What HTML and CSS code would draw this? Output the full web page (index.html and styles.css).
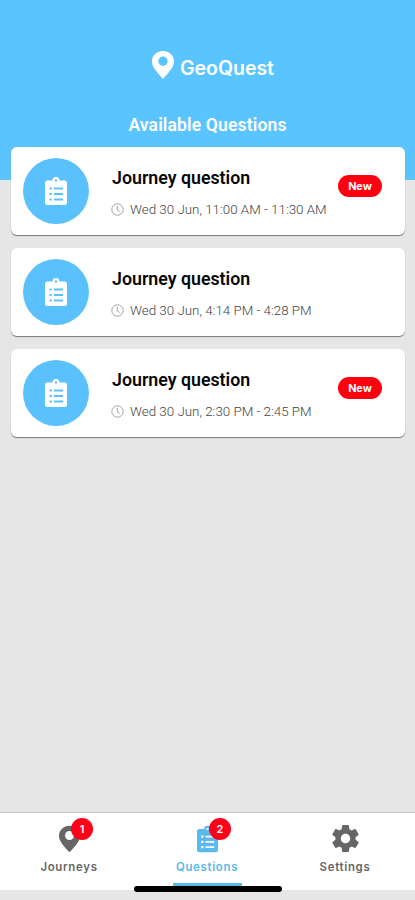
FILE: index.html
```html
<!DOCTYPE html>
<html lang="en">
<head>
<meta charset="utf-8">
<title>GeoQuest</title>
<link rel="stylesheet" href="styles.css">
</head>
<body>
<svg class="defs" width="0" height="0" aria-hidden="true">
  <symbol id="pin" viewBox="0 0 22 28"><path fill-rule="evenodd" d="M11 0C4.800 0 0 4.600 0 10.500 0 15.500 3 19 11 28 19 19 22 15.500 22 10.500 22 4.600 17.200 0 11 0ZM11 5.600A4.700 4.700 0 1 1 11 15A4.700 4.700 0 1 1 11 5.600Z"/></symbol>
  <symbol id="clipboard" viewBox="0 0 22 28"><path fill-rule="evenodd" d="M2.500 3.500H7.500A3.500 3.500 0 0 1 14.500 3.500H19.500A2.500 2.500 0 0 1 22 6V25.500A2.500 2.500 0 0 1 19.500 28H2.500A2.500 2.500 0 0 1 0 25.500V6A2.500 2.500 0 0 1 2.500 3.500ZM11 2.300A1.200 1.200 0 1 0 11 4.700A1.200 1.200 0 1 0 11 2.300ZM4.500 10.400H6.700V12.600H4.500ZM9 10.500H18V12.500H9ZM4.500 15.900H6.700V18.100H4.500ZM9 16H18V18H9ZM4.500 21.400H6.700V23.600H4.500ZM9 21.500H18V23.500H9Z"/></symbol>
  <symbol id="clock" viewBox="0 0 13 13"><g fill="none" stroke="currentColor" stroke-width=".9"><circle cx="6.500" cy="6.500" r="5.700"/><path d="M6.300 2.800V7L8.600 8.500"/></g></symbol>
  <symbol id="gear" viewBox="2 2 20 20"><path d="M19.430 12.980c.040-.320.070-.640.070-.980s-.030-.660-.070-.980l2.110-1.650c.190-.150.240-.420.120-.640l-2-3.460c-.120-.220-.390-.300-.610-.220l-2.490 1c-.520-.400-1.080-.730-1.690-.980l-.380-2.650C14.460 2.180 14.250 2 14 2h-4c-.250 0-.460.180-.490.420l-.380 2.650c-.610.250-1.170.590-1.690.980l-2.490-1c-.230-.090-.490 0-.610.220l-2 3.460c-.130.220-.070.490.120.640l2.110 1.650c-.040.320-.070.650-.070.980s.030.660.070.980l-2.110 1.650c-.190.150-.240.420-.120.640l2 3.460c.120.220.390.300.610.220l2.490-1c.520.400 1.080.730 1.690.980l.380 2.650c.030.240.240.420.490.420h4c.250 0 .460-.180.490-.420l.380-2.650c.610-.250 1.170-.590 1.690-.980l2.490 1c.230.090.490 0 .610-.220l2-3.460c.120-.220.070-.490-.120-.640l-2.110-1.650zM12 15.500c-1.930 0-3.500-1.570-3.500-3.500s1.570-3.500 3.500-3.500 3.500 1.570 3.500 3.500-1.570 3.500-3.500 3.500z"/></symbol>
</svg>
<div class="app">
  <header class="header">
    <div class="brand"><svg class="brand-pin"><use href="#pin"/></svg><span class="brand-name">GeoQuest</span></div>
    <h1 class="heading">Available Questions</h1>
  </header>
  <main class="list">
    <article class="card">
      <div class="avatar"><svg class="avatar-icon"><use href="#clipboard"/></svg></div>
      <div class="info"><h2 class="title">Journey question</h2><div class="meta"><svg class="clock"><use href="#clock"/></svg><span class="time">Wed 30 Jun, 11:00 AM - 11:30 AM</span></div></div>
      <span class="new">New</span>
    </article>
    <article class="card">
      <div class="avatar"><svg class="avatar-icon"><use href="#clipboard"/></svg></div>
      <div class="info"><h2 class="title">Journey question</h2><div class="meta"><svg class="clock"><use href="#clock"/></svg><span class="time">Wed 30 Jun, 4:14 PM - 4:28 PM</span></div></div>
    </article>
    <article class="card">
      <div class="avatar"><svg class="avatar-icon"><use href="#clipboard"/></svg></div>
      <div class="info"><h2 class="title">Journey question</h2><div class="meta"><svg class="clock"><use href="#clock"/></svg><span class="time">Wed 30 Jun, 2:30 PM - 2:45 PM</span></div></div>
      <span class="new">New</span>
    </article>
  </main>
  <nav class="tabs">
    <div class="tab"><div class="tab-icon"><svg class="tab-pin"><use href="#pin"/></svg><span class="count">1</span></div><span class="label">Journeys</span></div>
    <div class="tab active"><div class="tab-icon"><svg class="tab-clipboard"><use href="#clipboard"/></svg><span class="count">2</span></div><span class="label">Questions</span></div>
    <div class="tab"><div class="tab-icon"><svg class="tab-gear"><use href="#gear"/></svg></div><span class="label">Settings</span></div>
    <span class="home-indicator"></span>
  </nav>
</div>
</body>
</html>
```
FILE: styles.css
```css
* { box-sizing: border-box; }
body { margin: 0; background: #e6e6e6; font-family: Roboto, sans-serif; }
svg { display: block; fill: currentColor; flex: none; }
.defs { position: absolute; }
.app { height: 900px; padding-bottom: 10px; display: flex; flex-direction: column; overflow: hidden; }
.header { height: 180px; flex: none; padding-top: 51px; background: #5ac4ff; color: #fff; }
.brand { display: flex; height: 28px; padding-left: 152px; gap: 6px; }
.brand-pin { width: 22px; height: 28px; }
.brand-name { padding-top: 5px; font: 600 19.5px/25px Inter, sans-serif; letter-spacing: -.02px; }
.heading { margin: 35px 0 0; text-align: center; font-size: 17.5px; line-height: 22px; font-weight: 600; letter-spacing: .15px; }
.list { flex: 1; margin-top: -33px; padding: 0 10px 0 11px; display: flex; flex-direction: column; gap: 13px; }
.card { height: 88px; flex: none; display: flex; padding: 11px 23px 0 12px; background: #fff; border-radius: 6px; box-shadow: 0 1px 1px #777; }
.avatar { width: 66px; height: 66px; display: flex; align-items: center; justify-content: center; border-radius: 50%; background: #5bc1fc; color: #fff; flex: none; }
.avatar-icon { width: 22px; height: 28px; }
.info { margin-left: 22px; padding-top: 9px; flex: 1; white-space: nowrap; }
.title { margin: 0; color: #080808; font-size: 17.8px; line-height: 22px; font-weight: 600; text-indent: 1px; }
.meta { display: flex; align-items: center; gap: 6px; margin-top: 10px; height: 20px; }
.clock { width: 13px; height: 13px; color: #999; }
.time { padding-top: 1px; color: #444; font-size: 13.35px; font-weight: 300; line-height: 20px; }
.new { width: 44px; height: 22px; margin-top: 17px; flex: none; border-radius: 11px; background: #ff0010; color: #fff; font: 700 10.8px/23px Inter, sans-serif; text-align: center; }
.tabs { position: relative; height: 78px; flex: none; display: flex; padding: 0; background: #fff; border-top: 1px solid #c8c8c8; }
.tab { width: 138px; display: flex; flex-direction: column; align-items: center; color: #666; }
.tab-icon { position: relative; width: 28px; height: 28px; margin-top: 12px; display: flex; justify-content: center; }
.tab-pin { width: 21px; height: 28px; }
.tab-clipboard { width: 21px; height: 28px; }
.tab-gear { width: 27px; height: 27px; }
.count { position: absolute; left: 16px; top: -7px; width: 22px; height: 22px; border-radius: 50%; background: #ff0018; color: #fff; text-align: center; font: 600 11px/23px Inter, sans-serif; }
.label { margin-top: 6px; font: 600 11.4px/16px Inter, sans-serif; letter-spacing: .7px; }
.active { color: #5ab9ed; }
.active::after { content: ""; width: 69px; height: 4px; margin-top: 8px; background: #5ab9ed; }
.home-indicator { position: absolute; left: 134px; bottom: -2px; width: 148px; height: 6px; border-radius: 3px; background: #000; }
```
